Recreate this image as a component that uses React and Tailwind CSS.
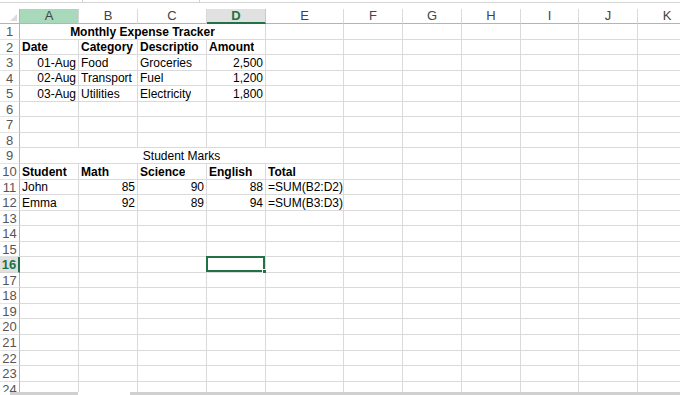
import React from "react";

const COLS = ["A", "B", "C", "D", "E", "F", "G", "H", "I", "J", "K"];

const ALIGN = {
  l: "justify-start pl-[2px]",
  r: "justify-end pr-[2px]",
  c: "justify-center",
};

// cells per row, left to right from column A (span = merged columns)
const DATA = {
  1: [{ v: "Monthly Expense Tracker", span: 4, b: true, a: "c" }],
  2: [
    { v: "Date", b: true },
    { v: "Category", b: true },
    { v: "Descriptio", b: true },
    { v: "Amount", b: true },
  ],
  3: [{ v: "01-Aug", a: "r" }, { v: "Food" }, { v: "Groceries" }, { v: "2,500", a: "r" }],
  4: [{ v: "02-Aug", a: "r" }, { v: "Transport" }, { v: "Fuel" }, { v: "1,200", a: "r" }],
  5: [{ v: "03-Aug", a: "r" }, { v: "Utilities" }, { v: "Electricity" }, { v: "1,800", a: "r" }],
  9: [{ v: "Student Marks", span: 5, a: "c" }],
  10: [
    { v: "Student", b: true },
    { v: "Math", b: true },
    { v: "Science", b: true },
    { v: "English", b: true },
    { v: "Total", b: true },
  ],
  11: [{ v: "John" }, { v: "85", a: "r" }, { v: "90", a: "r" }, { v: "88", a: "r" }, { v: "=SUM(B2:D2)" }],
  12: [{ v: "Emma" }, { v: "92", a: "r" }, { v: "89", a: "r" }, { v: "94", a: "r" }, { v: "=SUM(B3:D3)" }],
};

const SEL_ROW = 16;
const SEL_COL = 3; // D

function rowCells(r) {
  const given = DATA[r] || [];
  const out = [...given];
  let used = given.reduce((n, c) => n + (c.span || 1), 0);
  while (used < COLS.length) {
    out.push({ v: "" });
    used++;
  }
  return out;
}

function ColHeader({ label, idx }) {
  if (idx === 0) {
    return (
      <div className="flex items-center justify-center border-r border-b border-r-[#d4d4d4] border-b-[#b4b4b4] bg-[#a9d9bb] text-[13px] text-[#444]">
        {label}
      </div>
    );
  }
  if (idx === SEL_COL) {
    return (
      <div className="flex items-center justify-center border-r border-r-[#c8c8c8] border-b-2 border-b-[#217346] bg-[#e1e1e1] text-[13px] font-bold text-[#217346]">
        {label}
      </div>
    );
  }
  return (
    <div className="flex items-center justify-center border-r border-b border-r-[#dadada] border-b-[#b4b4b4] bg-white text-[13px] text-[#444]">
      {label}
    </div>
  );
}

function RowHeader({ r }) {
  if (r === SEL_ROW) {
    return (
      <div className="flex items-center justify-center border-b border-r-2 border-b-[#d4d4d4] border-r-[#217346] bg-[#e1e1e1] pt-px text-[13px] font-bold text-[#217346]">
        {r}
      </div>
    );
  }
  return (
    <div className="flex items-center justify-center border-r border-b border-r-[#b4b4b4] border-b-[#e4e4e4] bg-white pt-px text-[13px] text-[#555]">
      {r}
    </div>
  );
}

function Cell({ cell, selected }) {
  const span =
    cell.span === 4 ? "col-span-4" : cell.span === 5 ? "col-span-5" : "";
  return (
    <div
      className={`relative flex items-end overflow-visible whitespace-nowrap border-r border-b border-[#dadada] leading-[14px] text-[12px] text-black ${span} ${
        ALIGN[cell.a || "l"]
      } ${cell.b ? "font-bold" : ""}`}
    >
      <span className="overflow-hidden">{cell.v}</span>
      {selected && (
        <div className="absolute -left-[1px] -top-[1px] right-0 bottom-0 border-2 border-[#217346]">
          <div className="absolute -right-[4px] -bottom-[4px] h-[5px] w-[5px] border border-white bg-[#217346]" />
        </div>
      )}
    </div>
  );
}

export default function App() {
  const rows = Array.from({ length: 24 }, (_, i) => i + 1);

  return (
    <div
      className="flex h-[395px] w-[680px] flex-col overflow-hidden bg-white"
      style={{ fontFamily: '"Liberation Sans", Arial, sans-serif' }}
    >
      {/* remains of the formula bar */}
      <div className="flex h-[8.5px] shrink-0">
        <div className="h-[3px] w-[83px] border-b border-r border-[#d4d4d4]" />
        <div className="h-[3px] w-[117px] border-b border-r border-[#d4d4d4]" />
        <div className="h-[3px] flex-1 border-b border-[#d4d4d4]" />
      </div>

      {/* sheet grid */}
      <div className="h-[383.5px] shrink-0 overflow-hidden">
        <div className="grid w-[697px] grid-cols-[20px_59px_59px_69px_59px_78px_59px_59px_59px_58px_59px_59px] auto-rows-[15.55px]">
          <div className="relative border-r border-b border-r-[#b4b4b4] border-b-[#b4b4b4] bg-white">
            <svg className="absolute right-[2px] bottom-[2px]" width="7" height="7" viewBox="0 0 7 7">
              <path d="M7 0 L7 7 L0 7 Z" fill="#dcdcdc" />
            </svg>
          </div>
          {COLS.map((c, i) => (
            <ColHeader key={c} label={c} idx={i} />
          ))}

          {rows.map((r) => {
            let col = 0;
            return (
              <React.Fragment key={r}>
                <RowHeader r={r} />
                {rowCells(r).map((cell, i) => {
                  const selected = r === SEL_ROW && col === SEL_COL;
                  col += cell.span || 1;
                  return <Cell key={i} cell={cell} selected={selected} />;
                })}
              </React.Fragment>
            );
          })}
        </div>
      </div>

      {/* sheet tab strip */}
      <div className="flex h-[3px] shrink-0">
        <div className="w-[10px] bg-white" />
        <div className="w-[68px] bg-[#d0d0d0]" />
        <div className="w-[52px] bg-white" />
        <div className="flex-1 bg-[#d0d0d0]" />
      </div>
    </div>
  );
}
